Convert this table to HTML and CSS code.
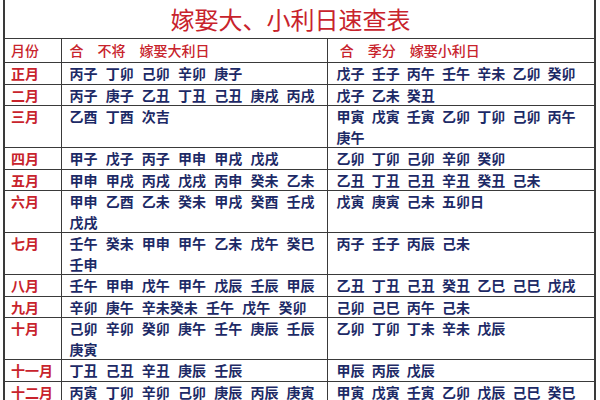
FILE: index.html
```html
<!DOCTYPE html>
<html lang="zh">
<head>
<meta charset="utf-8">
<link rel="stylesheet" href="styles.css">
</head>
<body>
<div class="sheet">
  <div class="title">嫁娶大、小利日速查表</div>
  <table class="chart">
    <colgroup><col class="c-month"><col class="c-big"><col class="c-small"></colgroup>
    <tr class="head">
      <td class="month">月份</td>
      <td class="big">合　不将　嫁娶大利日</td>
      <td class="small">&nbsp;合　季分　嫁娶小利日</td>
    </tr>
    <tr><td class="month">正月</td><td class="big">丙子 丁卯 己卯 辛卯 庚子</td><td class="small">戊子 壬子 丙午 壬午 辛未 乙卯 癸卯</td></tr>
    <tr><td class="month">二月</td><td class="big">丙子 庚子 乙丑 丁丑 己丑 庚戌 丙戌</td><td class="small">戊子 乙未 癸丑</td></tr>
    <tr><td class="month">三月</td><td class="big">乙酉 丁酉 次吉</td><td class="small">甲寅 戊寅 壬寅 乙卯 丁卯 己卯 丙午<br>庚午</td></tr>
    <tr><td class="month">四月</td><td class="big">甲子 戊子 丙子 甲申 甲戌 戊戌</td><td class="small">乙卯 丁卯 己卯 辛卯 癸卯</td></tr>
    <tr><td class="month">五月</td><td class="big">甲申 甲戌 丙戌 戊戌 丙申 癸未 乙未</td><td class="small">乙丑 丁丑 己丑 辛丑 癸丑 己未</td></tr>
    <tr><td class="month">六月</td><td class="big">甲申 乙酉 乙未 癸未 甲戌 癸酉 壬戌<br>戊戌</td><td class="small">戊寅 庚寅 己未 五卯日</td></tr>
    <tr><td class="month">七月</td><td class="big">壬午 癸未 甲申 甲午 乙未 戊午 癸巳<br>壬申</td><td class="small">丙子 壬子 丙辰 己未</td></tr>
    <tr><td class="month">八月</td><td class="big">壬午 甲申 戊午 甲午 戊辰 壬辰 甲辰</td><td class="small">乙丑 丁丑 己丑 癸丑 乙巳 己巳 戊戌</td></tr>
    <tr><td class="month">九月</td><td class="big">辛卯 庚午 辛未癸未 壬午 戊午 癸卯</td><td class="small">己卯 己巳 丙午 己未</td></tr>
    <tr><td class="month">十月</td><td class="big">己卯 辛卯 癸卯 庚午 壬午 庚辰 壬辰<br>庚寅</td><td class="small">乙卯 丁卯 丁未 辛未 戊辰</td></tr>
    <tr><td class="month">十一月</td><td class="big">丁丑 己丑 辛丑 庚辰 壬辰</td><td class="small">甲辰 丙辰 戊辰</td></tr>
    <tr><td class="month">十二月</td><td class="big">丙寅 丁卯 辛卯 己卯 庚辰 丙辰 庚寅</td><td class="small">甲寅 戊寅 壬寅 乙卯 戊辰 己巳 癸巳</td></tr>
  </table>
</div>
</body>
</html>
```
FILE: styles.css
```css
html, body {
  margin: 0;
  padding: 0;
  background: #ffffff;
}
body {
  width: 600px;
  height: 400px;
  overflow: hidden;
  font-family: "Noto Sans CJK SC", "Noto Sans", sans-serif;
}
.sheet {
  box-sizing: border-box;
  width: 593px;
  margin-left: 3px;
  border-left: 2px solid #3a3a3a;
  border-right: 2px solid #3a3a3a;
}
.title {
  height: 38px;
  box-sizing: border-box;
  padding-right: 18px;
  line-height: 38px;
  text-align: center;
  font-size: 24px;
  color: #c8232c;
}
.chart {
  width: 100%;
  border-collapse: collapse;
  table-layout: fixed;
}
.c-month { width: 56px; }
.c-big { width: 266px; }
.chart td {
  border: 1px solid #3a3a3a;
  padding: 0;
  vertical-align: top;
  line-height: 20.5px;
  font-size: 14px;
  font-weight: 700;
  white-space: nowrap;
  overflow: hidden;
}
.chart td:first-child { border-left: none; }
.chart td:last-child { border-right: none; }
.chart .month {
  color: #c8232c;
  padding-left: 6px;
}
.chart .big {
  color: #1d2a66;
  padding-left: 8px;
  word-spacing: 5px;
}
.chart .small {
  color: #1d2a66;
  padding-left: 9px;
  word-spacing: 4px;
}
.chart .head td {
  color: #c8232c;
  height: 23px;
  line-height: 23px;
  vertical-align: middle;
  font-weight: 500;
  word-spacing: 0;
}
```
